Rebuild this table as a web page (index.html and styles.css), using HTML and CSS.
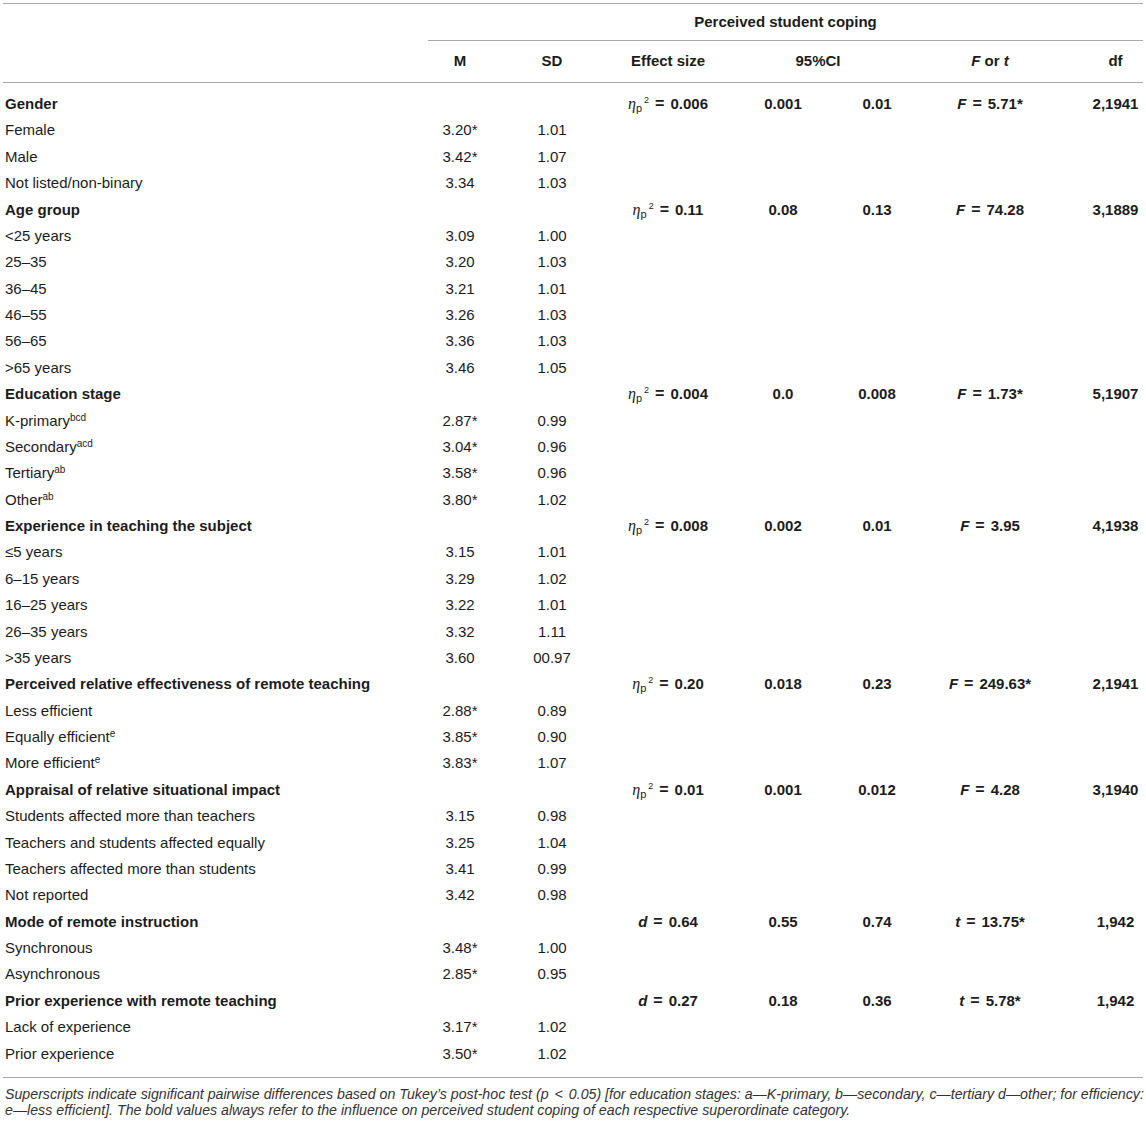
FILE: index.html
```html
<!DOCTYPE html>
<html lang="en">
<head>
<meta charset="utf-8">
<title>Perceived student coping</title>
<link rel="stylesheet" href="styles.css">
</head>
<body>
<div class="wrap">
<table class="tbl">
  <colgroup>
    <col class="c-label"><col class="c-m"><col class="c-sd"><col class="c-es"><col class="c-ci1"><col class="c-ci2"><col class="c-f"><col class="c-df">
  </colgroup>
  <thead>
    <tr class="hr1">
      <th class="lbl" rowspan="2"></th>
      <th colspan="7" class="span">Perceived student coping</th>
    </tr>
    <tr class="hr2">
      <th>M</th>
      <th>SD</th>
      <th>Effect size</th>
      <th colspan="2">95%CI</th>
      <th><i>F</i> or <i>t</i></th>
      <th class="df">df</th>
    </tr>
  </thead>
  <tbody>
    <tr class="cat first"><td class="lbl">Gender</td><td></td><td></td><td><span class="eta">η</span><span class="sub">p</span><span class="sq">2</span><span class="eq">=</span>0.006</td><td>0.001</td><td>0.01</td><td><i>F</i><span class="eq">=</span>5.71*</td><td class="df">2,1941</td></tr>
    <tr><td class="lbl">Female</td><td>3.20*</td><td>1.01</td><td></td><td></td><td></td><td></td><td class="df"></td></tr>
    <tr><td class="lbl">Male</td><td>3.42*</td><td>1.07</td><td></td><td></td><td></td><td></td><td class="df"></td></tr>
    <tr><td class="lbl">Not listed/non-binary</td><td>3.34</td><td>1.03</td><td></td><td></td><td></td><td></td><td class="df"></td></tr>

    <tr class="cat"><td class="lbl">Age group</td><td></td><td></td><td><span class="eta">η</span><span class="sub">p</span><span class="sq">2</span><span class="eq">=</span>0.11</td><td>0.08</td><td>0.13</td><td><i>F</i><span class="eq">=</span>74.28</td><td class="df">3,1889</td></tr>
    <tr><td class="lbl">&lt;25 years</td><td>3.09</td><td>1.00</td><td></td><td></td><td></td><td></td><td class="df"></td></tr>
    <tr><td class="lbl">25–35</td><td>3.20</td><td>1.03</td><td></td><td></td><td></td><td></td><td class="df"></td></tr>
    <tr><td class="lbl">36–45</td><td>3.21</td><td>1.01</td><td></td><td></td><td></td><td></td><td class="df"></td></tr>
    <tr><td class="lbl">46–55</td><td>3.26</td><td>1.03</td><td></td><td></td><td></td><td></td><td class="df"></td></tr>
    <tr><td class="lbl">56–65</td><td>3.36</td><td>1.03</td><td></td><td></td><td></td><td></td><td class="df"></td></tr>
    <tr><td class="lbl">&gt;65 years</td><td>3.46</td><td>1.05</td><td></td><td></td><td></td><td></td><td class="df"></td></tr>

    <tr class="cat"><td class="lbl">Education stage</td><td></td><td></td><td><span class="eta">η</span><span class="sub">p</span><span class="sq">2</span><span class="eq">=</span>0.004</td><td>0.0</td><td>0.008</td><td><i>F</i><span class="eq">=</span>1.73*</td><td class="df">5,1907</td></tr>
    <tr><td class="lbl">K-primary<sup>bcd</sup></td><td>2.87*</td><td>0.99</td><td></td><td></td><td></td><td></td><td class="df"></td></tr>
    <tr><td class="lbl">Secondary<sup>acd</sup></td><td>3.04*</td><td>0.96</td><td></td><td></td><td></td><td></td><td class="df"></td></tr>
    <tr><td class="lbl">Tertiary<sup>ab</sup></td><td>3.58*</td><td>0.96</td><td></td><td></td><td></td><td></td><td class="df"></td></tr>
    <tr><td class="lbl">Other<sup>ab</sup></td><td>3.80*</td><td>1.02</td><td></td><td></td><td></td><td></td><td class="df"></td></tr>

    <tr class="cat"><td class="lbl">Experience in teaching the subject</td><td></td><td></td><td><span class="eta">η</span><span class="sub">p</span><span class="sq">2</span><span class="eq">=</span>0.008</td><td>0.002</td><td>0.01</td><td><i>F</i><span class="eq">=</span>3.95</td><td class="df">4,1938</td></tr>
    <tr><td class="lbl">≤5 years</td><td>3.15</td><td>1.01</td><td></td><td></td><td></td><td></td><td class="df"></td></tr>
    <tr><td class="lbl">6–15 years</td><td>3.29</td><td>1.02</td><td></td><td></td><td></td><td></td><td class="df"></td></tr>
    <tr><td class="lbl">16–25 years</td><td>3.22</td><td>1.01</td><td></td><td></td><td></td><td></td><td class="df"></td></tr>
    <tr><td class="lbl">26–35 years</td><td>3.32</td><td>1.11</td><td></td><td></td><td></td><td></td><td class="df"></td></tr>
    <tr><td class="lbl">&gt;35 years</td><td>3.60</td><td>00.97</td><td></td><td></td><td></td><td></td><td class="df"></td></tr>

    <tr class="cat"><td class="lbl">Perceived relative effectiveness of remote teaching</td><td></td><td></td><td><span class="eta">η</span><span class="sub">p</span><span class="sq">2</span><span class="eq">=</span>0.20</td><td>0.018</td><td>0.23</td><td><i>F</i><span class="eq">=</span>249.63*</td><td class="df">2,1941</td></tr>
    <tr><td class="lbl">Less efficient</td><td>2.88*</td><td>0.89</td><td></td><td></td><td></td><td></td><td class="df"></td></tr>
    <tr><td class="lbl">Equally efficient<sup>e</sup></td><td>3.85*</td><td>0.90</td><td></td><td></td><td></td><td></td><td class="df"></td></tr>
    <tr><td class="lbl">More efficient<sup>e</sup></td><td>3.83*</td><td>1.07</td><td></td><td></td><td></td><td></td><td class="df"></td></tr>

    <tr class="cat"><td class="lbl">Appraisal of relative situational impact</td><td></td><td></td><td><span class="eta">η</span><span class="sub">p</span><span class="sq">2</span><span class="eq">=</span>0.01</td><td>0.001</td><td>0.012</td><td><i>F</i><span class="eq">=</span>4.28</td><td class="df">3,1940</td></tr>
    <tr><td class="lbl">Students affected more than teachers</td><td>3.15</td><td>0.98</td><td></td><td></td><td></td><td></td><td class="df"></td></tr>
    <tr><td class="lbl">Teachers and students affected equally</td><td>3.25</td><td>1.04</td><td></td><td></td><td></td><td></td><td class="df"></td></tr>
    <tr><td class="lbl">Teachers affected more than students</td><td>3.41</td><td>0.99</td><td></td><td></td><td></td><td></td><td class="df"></td></tr>
    <tr><td class="lbl">Not reported</td><td>3.42</td><td>0.98</td><td></td><td></td><td></td><td></td><td class="df"></td></tr>

    <tr class="cat"><td class="lbl">Mode of remote instruction</td><td></td><td></td><td><i>d</i><span class="eq">=</span>0.64</td><td>0.55</td><td>0.74</td><td><i>t</i><span class="eq">=</span>13.75*</td><td class="df">1,942</td></tr>
    <tr><td class="lbl">Synchronous</td><td>3.48*</td><td>1.00</td><td></td><td></td><td></td><td></td><td class="df"></td></tr>
    <tr><td class="lbl">Asynchronous</td><td>2.85*</td><td>0.95</td><td></td><td></td><td></td><td></td><td class="df"></td></tr>

    <tr class="cat"><td class="lbl">Prior experience with remote teaching</td><td></td><td></td><td><i>d</i><span class="eq">=</span>0.27</td><td>0.18</td><td>0.36</td><td><i>t</i><span class="eq">=</span>5.78*</td><td class="df">1,942</td></tr>
    <tr><td class="lbl">Lack of experience</td><td>3.17*</td><td>1.02</td><td></td><td></td><td></td><td></td><td class="df"></td></tr>
    <tr class="last"><td class="lbl">Prior experience</td><td>3.50*</td><td>1.02</td><td></td><td></td><td></td><td></td><td class="df"></td></tr>
  </tbody>
</table>
<p class="note">Superscripts indicate significant pairwise differences based on Tukey’s post-hoc test (<i>p</i> <span class="lt">&lt;</span> 0.05) [for education stages: a—K-primary, b—secondary, c—tertiary d—other; for efficiency:<br>e—less efficient]. The bold values always refer to the influence on perceived student coping of each respective superordinate category.</p>
</div>
</body>
</html>
```

FILE: styles.css
```css
html, body {
  margin: 0;
  padding: 0;
  background: #ffffff;
}

body {
  font-family: "Liberation Sans", Arial, Helvetica, sans-serif;
  font-size: 15px;
  color: #1c1c1c;
}

.wrap {
  padding: 3px 3px 0 3px;
}

.tbl {
  width: 1140px;
  border-collapse: collapse;
  table-layout: fixed;
  border-top: 1px solid #a9a9a9;
  border-bottom: 1px solid #a9a9a9;
}

.c-label { width: 425px; }
.c-m { width: 64px; }
.c-sd { width: 120px; }
.c-es { width: 112px; }
.c-ci1 { width: 118px; }
.c-ci2 { width: 70px; }
.c-f { width: 156px; }
.c-df { width: 75px; }

.tbl th,
.tbl td {
  padding: 4.2px 0;
  line-height: 18px;
  text-align: center;
  white-space: nowrap;
  vertical-align: middle;
}

.tbl th {
  font-weight: bold;
}

.tbl .lbl {
  text-align: left;
  padding-left: 2px;
}

.tbl .df {
  padding-left: 20px;
}

.hr1 th {
  padding-top: 9px;
  padding-bottom: 9px;
}

.hr1 .span {
  border-bottom: 1px solid #a9a9a9;
}

.hr2 th {
  padding-top: 11px;
  padding-bottom: 12px;
  border-bottom: 1px solid #a9a9a9;
}

.hr1 th.lbl {
  border-bottom: 1px solid #a9a9a9;
}

.cat td {
  font-weight: bold;
}

.first td {
  padding-top: 12px;
}

.last td {
  padding-bottom: 14px;
}

sup {
  font-size: 10px;
  line-height: 0;
  vertical-align: 5px;
}

.eta {
  font-family: "Liberation Serif", "Times New Roman", serif;
  font-style: italic;
  font-weight: normal;
  font-size: 16px;
}

.sub {
  font-weight: normal;
  font-size: 11px;
  vertical-align: -3px;
  line-height: 0;
}

.sq {
  font-weight: normal;
  font-size: 9px;
  vertical-align: 6px;
  line-height: 0;
  margin-left: 2px;
}

.eq {
  display: inline-block;
  margin: 0 6px;
  font-size: 16px;
}

.lt {
  margin: 0 2px;
}

.note {
  margin: 8px 0 0 2px;
  font-size: 14.2px;
  line-height: 16px;
  font-style: italic;
  color: #333333;
  white-space: nowrap;
}
```
